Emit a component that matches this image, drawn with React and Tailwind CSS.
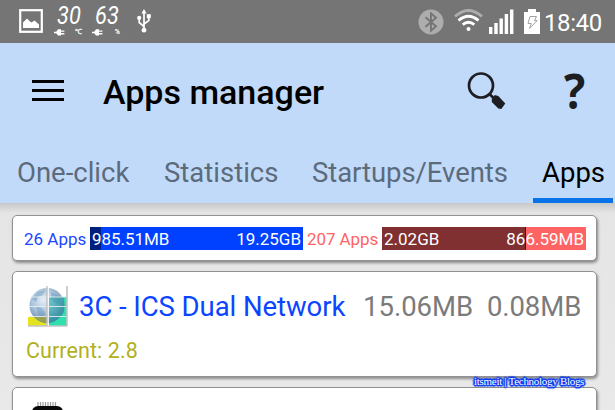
import React from "react";

function PictureIcon() {
  return (
    <svg width="24" height="24" viewBox="0 0 24 24">
      <rect x="1.2" y="1.2" width="21.6" height="21.6" fill="none" stroke="#fff" strokeWidth="2.2" />
      <path d="M4 19v-5.500l4-4 3 3 1.500 1 3-2 4.500 4V19z" fill="#fff" />
    </svg>
  );
}

function PlugIcon() {
  return (
    <svg width="11" height="7" viewBox="0 0 11 7" fill="#fff">
      <path d="M0 2.800h2.200L4 .3h3V1.400h3.400v1.400H7v1.300h3.400v1.400H7v1.100H4L2.200 4.300H0z" />
    </svg>
  );
}

function Gauge({ value, unit }) {
  return (
    <div className="flex w-[28px] flex-col">
      <div className="h-[24px] w-[28px] pl-[3px]">
        <div className="origin-left scale-x-[.84] whitespace-nowrap text-[26px] font-normal italic leading-[22px]">{value}</div>
      </div>
      <div className="flex h-[8px] items-center justify-between">
        <PlugIcon />
        <span className="text-[7px] font-black leading-[8px]">{unit}</span>
      </div>
    </div>
  );
}

function UsbIcon() {
  return (
    <svg width="14" height="24" viewBox="0 0 14 24" fill="none" stroke="#fff" strokeWidth="1.7">
      <path d="M7 3v18M7 17.5L2.2 13.5V9.5M7 15l4.8-3.500V7" />
      <path d="M4.4 4.5L7 0l2.600 4.500z" fill="#fff" stroke="none" />
      <circle cx="7" cy="21.2" r="2.4" fill="#fff" stroke="none" />
      <circle cx="2.2" cy="8.9" r="2.1" fill="#fff" stroke="none" />
      <path d="M9.8 5.2h4v4h-4z" fill="#fff" stroke="none" />
    </svg>
  );
}

function BluetoothIcon() {
  return (
    <svg width="26" height="26" viewBox="0 0 26 26">
      <circle cx="13" cy="13" r="12.5" fill="#adadad" />
      <path d="M7.5 8.3l10.5 9-5 4.3V4.4l5 4.3-10.5 9" fill="none" stroke="#757575" strokeWidth="1.9" />
    </svg>
  );
}

function WifiIcon() {
  return (
    <svg width="29" height="23" viewBox="0 0 29 23" fill="none" strokeWidth="2.8">
      <path d="M1 7.5Q14.5-4.6 28 7.5" stroke="#adadad" />
      <path d="M4.5 11.5Q14.5 3 24.5 11.5M8.7 15.6Q14.5 11 20.3 15.6" stroke="#fff" />
      <circle cx="14.5" cy="20" r="2" fill="#fff" />
    </svg>
  );
}

function SignalIcon() {
  return (
    <svg width="25" height="25" viewBox="0 0 25 25" fill="#fff">
      <path d="M0 18h3.4v7H0zM5.3 14h3.4v11H5.3zM10.5 9.6h3.4V25h-3.4zM15.7 5h3.4v20h-3.4zM21 .4h3.4V25H21z" />
    </svg>
  );
}

function BatteryIcon() {
  return (
    <svg width="17" height="25" viewBox="0 0 17 25">
      <path d="M4 0h8v3h4v22H0V3h4z" fill="#fff" />
      <path d="M6 7.500h6.500l-2 4.100h2.600L5.500 19.500l1.800-5H4z" fill="none" stroke="#a2a2a2" strokeWidth="1" />
    </svg>
  );
}

function StatusBar() {
  return (
    <header className="flex h-[42.5px] items-start bg-[#757575] text-white">
      <div className="ml-[19px] mt-[9px]"><PictureIcon /></div>
      <div className="ml-[11px] mt-[4px]"><Gauge value="30" unit="℃" /></div>
      <div className="ml-[10px] mt-[4px]"><Gauge value="63" unit="%" /></div>
      <div className="ml-[17px] mt-[9px]"><UsbIcon /></div>
      <div className="ml-auto mt-[9px]"><BluetoothIcon /></div>
      <div className="ml-[10px] mt-[9px]"><WifiIcon /></div>
      <div className="ml-[6px] mt-[9px]"><SignalIcon /></div>
      <div className="ml-[10px] mt-[9px]"><BatteryIcon /></div>
      <div className="ml-[3px] mt-[7.5px] w-[71px] whitespace-nowrap text-[24px] leading-[30px] tracking-[-0.4px]">18:40</div>
    </header>
  );
}

function Toolbar() {
  return (
    <div className="flex h-[98px] items-start">
      <div className="ml-[32px] mt-[37px] flex w-[32px] flex-col gap-[6px]">
        <div className="h-[3px] bg-black" />
        <div className="h-[3px] bg-black" />
        <div className="h-[3px] bg-black" />
      </div>
      <h1 className="ml-[39px] mt-[29px] whitespace-nowrap text-[34px] font-medium leading-[40px] text-black">Apps manager</h1>
      <svg className="ml-auto mt-[28px]" width="40" height="40" viewBox="0 0 40 40">
        <circle cx="14" cy="14.5" r="12" fill="none" stroke="#1d1e22" strokeWidth="2.700" />
        <path d="M22.5 23l4 4" stroke="#1d1e22" strokeWidth="2.6" />
        <path d="M24.800 28l3-4 3.500 1 7 7.500-4 5.500-3-.5-6.500-6.500z" fill="#1d1e22" />
      </svg>
      <div className="ml-[57px] mr-[26px] mt-[22px] w-[25px] whitespace-nowrap font-['Open_Sans',sans-serif] text-[48px] font-bold leading-[52px] text-[#1d1e22]">
        <div className="origin-left scale-x-[.93]">?</div>
      </div>
    </div>
  );
}

function Tabs() {
  return (
    <nav className="grid h-[62px] grid-cols-[147px_148px_221px_80px] whitespace-nowrap pl-[17px] text-[27.5px] leading-[34px] text-[#5c6b7b]">
      <div className="pt-[15px]">One-click</div>
      <div className="pt-[15px]">Statistics</div>
      <div className="pt-[15px] tracking-[-0.06px]">Startups/Events</div>
      <div className="flex h-[62px] flex-col justify-between pt-[15px] text-black">
        <span className="pl-[9px]">Apps</span>
        <div className="h-[5px] bg-[#0873e8]" />
      </div>
    </nav>
  );
}

const card = "ml-[12px] w-[585px] shrink-0 rounded-[5px] border border-[#919191] bg-white shadow-[1px_2px_3px_rgba(0,0,0,0.4)]";

function UsageCard() {
  return (
    <section className={card + " mt-[12px] flex h-[46px] items-start whitespace-nowrap pl-[11px] pt-[11px] text-[17px] leading-[24px]"}>
      <div className="w-[66px] text-[#1c48ff]">26 Apps</div>
      <div className="flex h-[23px] w-[213px] justify-between bg-[linear-gradient(90deg,#002080_11px,#0040ff_11px)] pl-[2px] pr-[2px] text-white">
        <span className="tracking-[-0.05px]">985.51MB</span>
        <span>19.25GB</span>
      </div>
      <div className="w-[79px] pl-[4px] tracking-[-0.08px] text-[#ff6464]">207 Apps</div>
      <div className="flex h-[23px] w-[204px] justify-between bg-[linear-gradient(90deg,#803030_143px,#401818_143px,#401818_144px,#ff6464_144px)] pl-[2px] pr-[2px] text-white">
        <span>2.02GB</span>
        <span>866.59MB</span>
      </div>
    </section>
  );
}

function NetworkIcon() {
  return (
    <svg width="40" height="41" viewBox="0 0 40 41">
      <defs>
        <radialGradient id="globe" cx="40%" cy="35%" r="65%">
          <stop offset="0" stopColor="#e3edf5" />
          <stop offset=".5" stopColor="#a9c4dc" />
          <stop offset="1" stopColor="#587da8" />
        </radialGradient>
      </defs>
      <path d="M0 31h19v9H0z" fill="#e4e31c" />
      <path d="M21 11h18v29H21z" fill="#2fdfae" />
      <circle cx="19" cy="19.5" r="17.5" fill="url(#globe)" opacity=".94" />
      <path d="M4 13l6-7 7-2-2 5-5 2-2 5zM8 20l6 2 3 5-3 6-4-5zM23 6l8 4 2 8-6-1-4-4z" fill="#5486b0" opacity=".35" />
      <path d="M21 11h15v15q-5 9-15 11z" fill="#129f9f" opacity=".45" />
      <path d="M6 31h13v6q-8-1-13-6z" fill="#a1a52d" opacity=".75" />
      <path d="M2 11h37M1 20.5h38M1 30.5h38" stroke="#e8f2f2" strokeWidth="1.2" opacity=".85" />
      <path d="M19 0v40M39 0v40M0 40h39" stroke="#c4c4c4" strokeWidth="1.6" fill="none" />
      <path d="M20.3 0v40" stroke="#fff" strokeWidth="1" />
    </svg>
  );
}

function AppCard() {
  return (
    <section className={card + " mt-[10px] h-[106px] whitespace-nowrap"}>
      <div className="flex h-[66px] items-start pl-[15px] pt-[14px] text-[27.5px] leading-[42px]">
        <div className="w-[51px]"><NetworkIcon /></div>
        <div className="w-[284px] tracking-[-0.06px] text-[#0b45ff]">3C - ICS Dual Network</div>
        <div className="w-[124px] text-[#7b7b7b]">15.06MB</div>
        <div className="tracking-[-0.1px] text-[#7b7b7b]">0.08MB</div>
      </div>
      <div className="pl-[13px] text-[21.5px] leading-[26px] tracking-[0.08px] text-[#b1b01c]">Current: 2.8</div>
    </section>
  );
}

function NextCard() {
  return (
    <section className={card + " relative mt-[10px] h-[60px] pl-[18px] pt-[14px]"}>
      <svg width="34" height="40" viewBox="0 0 34 40">
        <path d="M7 0v6M9.500 0v6M12 0v6M14.500 0v6M17 0v6M19.500 0v6M22 0v6M24.500 0v6" stroke="#999" strokeWidth="1.2" />
        <rect x="1" y="4" width="31" height="35" rx="6" fill="#080808" />
      </svg>
      <div className="absolute left-[461px] top-[-13px] whitespace-nowrap font-['Liberation_Serif',serif] text-[11px] leading-[12px] tracking-[-0.29px] text-white [text-shadow:1px_0_0_#0a3cf0,-1px_0_0_#0a3cf0,0_1px_0_#0a3cf0,0_-1px_0_#0a3cf0,1px_1px_0_#0a3cf0,-1px_-1px_0_#0a3cf0,1px_-1px_0_#0a3cf0,-1px_1px_0_#0a3cf0,2px_0_1px_#0a3cf0,-2px_0_1px_#0a3cf0,0_2px_1px_#0a3cf0,0_-2px_1px_#0a3cf0]">
        itsmeit | Technology Blogs
      </div>
    </section>
  );
}

export default function App() {
  return (
    <div className="flex h-[410px] w-[615px] flex-col overflow-hidden bg-[#e8e8e8] font-[Roboto,sans-serif]">
      <StatusBar />
      <div className="h-[160.5px] shrink-0 bg-[#c1dafa]">
        <Toolbar />
        <Tabs />
      </div>
      <main className="flex h-[207px] shrink-0 flex-col bg-[linear-gradient(180deg,#c8c8c8_0px,#e5e5e5_10px,#e9e9e9_100%)]">
        <UsageCard />
        <AppCard />
        <NextCard />
      </main>
    </div>
  );
}
